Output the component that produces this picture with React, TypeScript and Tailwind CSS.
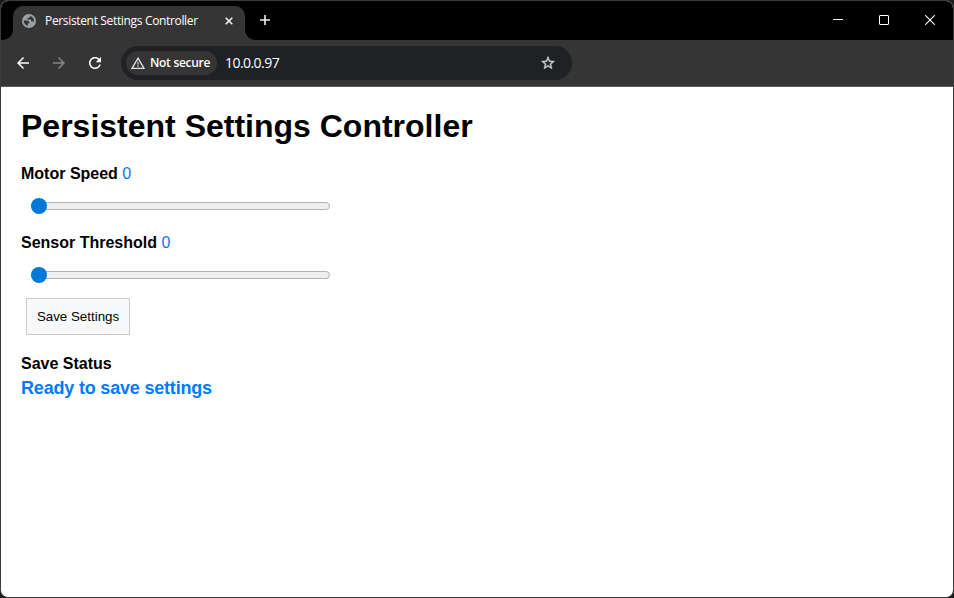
import React, { useState } from "react";

function Globe() {
  return (
    <svg width="14" height="14" viewBox="0 0 14 14" className="shrink-0">
      <circle cx="7" cy="7" r="7" fill="#9aa0a6" />
      <path
        d="M1.8 6.5H5Q7.3 6.7 7.4 8.5V9.3H5.9V11.8H7.2C4.2 12 1.8 9.8 1.8 6.5ZM8.4 2.1Q8.4 3.7 6.6 3.8H5.5V5.4H8.4Q9.3 5.5 9.3 6.5V7.4H12C12.3 4.8 10.6 2.7 8.4 2.1Z"
        fill="#353535"
      />
    </svg>
  );
}

function TabStrip() {
  return (
    <div className="flex h-[39px] shrink-0 items-end bg-black">
      <svg width="12" height="12" viewBox="0 0 12 12" className="shrink-0">
        <path d="M12 0V12H0Q12 12 12 0Z" fill="#353535" />
      </svg>
      <div className="flex h-[34px] w-[232px] shrink-0 items-center rounded-t-[10px] bg-[#353535] pb-[5px] pl-[9px]">
        <Globe />
        <span className="ml-[9px] w-[170px] whitespace-nowrap font-['Open_Sans','Noto_Sans',sans-serif] text-[12px] tracking-[-0.34px] text-white">
          Persistent Settings Controller
        </span>
        <svg width="8" height="8" viewBox="0 0 8 8" className="ml-[10px] shrink-0">
          <path d="M.7.7 7.3 7.3M7.3.7.7 7.3" stroke="#f1f1f1" strokeWidth="1.6" />
        </svg>
      </div>
      <svg width="12" height="12" viewBox="0 0 12 12" className="shrink-0">
        <path d="M0 0V12H12Q0 12 0 0Z" fill="#353535" />
      </svg>
      <svg width="10" height="10" viewBox="0 0 10 10" className="mb-[15px] ml-[3px] shrink-0">
        <path d="M5 0V10M0 5H10" stroke="#f1f1f1" strokeWidth="1.6" />
      </svg>
      <div className="mb-[15px] ml-auto mr-[18px] flex items-center gap-[36px]">
        <svg width="10" height="10" viewBox="0 0 10 10">
          <path d="M0 4.5H10" stroke="#fff" />
        </svg>
        <svg width="10" height="10" viewBox="0 0 10 10">
          <rect x=".5" y=".5" width="9" height="9" rx=".5" fill="none" stroke="#fff" />
        </svg>
        <svg width="10" height="10" viewBox="0 0 10 10">
          <path d="M.2.2 9.8 9.8M9.8.2.2 9.8" stroke="#fff" strokeWidth="1.1" />
        </svg>
      </div>
    </div>
  );
}

function Toolbar() {
  return (
    <div className="flex h-[47px] shrink-0 items-center border-b border-[#5c5c5c] bg-[#353535] pl-[13px]">
      <svg width="18" height="18" viewBox="0 0 24 24" className="shrink-0" fill="#fff">
        <path d="M20 11H7.83l5.59-5.59L12 4l-8 8 8 8 1.41-1.41L7.83 13H20v-2z" />
      </svg>
      <svg width="18" height="18" viewBox="0 0 24 24" className="ml-[18px] shrink-0" fill="#858585">
        <path d="M12 4l-1.41 1.41L16.17 11H4v2h12.17l-5.58 5.59L12 20l8-8z" />
      </svg>
      <svg width="18" height="18" viewBox="0 0 24 24" className="ml-[18px] shrink-0" fill="#fff">
        <path d="M17.65 6.35C16.2 4.9 14.21 4 12 4c-4.42 0-7.99 3.58-7.99 8s3.57 8 7.99 8c3.73 0 6.84-2.55 7.73-6h-2.08c-.82 2.33-3.04 4-5.65 4-3.31 0-6-2.69-6-6s2.69-6 6-6c1.66 0 3.14.69 4.22 1.78L13 11h7V4l-2.35 2.35z" />
      </svg>
      <div className="ml-[17px] flex h-[34px] w-[451px] items-center rounded-full bg-[#202124] pl-[5px] pr-[16px]">
        <div className="flex h-[24px] w-[91px] items-center rounded-full bg-[#353535] pl-[5px]">
          <svg width="14" height="12" viewBox="0 0 14 12" className="shrink-0">
            <path d="M7 1.2 13 11.4H1Z" fill="none" stroke="#e3e3e3" strokeWidth="1.3" />
            <path d="M7 4.7V7.8M7 8.6V9.9" stroke="#d0d0d0" strokeWidth="1.2" />
          </svg>
          <span className="ml-[5px] whitespace-nowrap font-['Open_Sans','Noto_Sans',sans-serif] text-[12px] font-semibold tracking-[-0.3px] text-white">
            Not secure
          </span>
        </div>
        <span className="ml-[8px] pb-px font-['Open_Sans','Noto_Sans',sans-serif] text-[14px] tracking-[-0.55px] text-white">
          10.0.0.97
        </span>
        <svg width="16" height="16" viewBox="0 0 24 24" className="ml-auto shrink-0" fill="#d0d1d3">
          <path d="M22 9.24l-7.19-.62L12 2 9.19 8.63 2 9.24l5.46 4.73L5.82 21 12 17.27 18.18 21l-1.63-7.03L22 9.24zM12 15.4l-3.76 2.27 1-4.28-3.32-2.88 4.38-.38L12 6.1l1.71 4.04 4.38.38-3.32 2.88 1 4.28L12 15.4z" stroke="#d0d1d3" strokeWidth=".6" />
        </svg>
      </div>
    </div>
  );
}

const trackClasses =
  "[&::-webkit-slider-runnable-track]:h-[8px] [&::-webkit-slider-runnable-track]:rounded-full [&::-webkit-slider-runnable-track]:border [&::-webkit-slider-runnable-track]:border-[#b2b2b2] [&::-webkit-slider-runnable-track]:bg-[#efefef]";
const thumbClasses =
  "[&::-webkit-slider-thumb]:ml-[-1px] [&::-webkit-slider-thumb]:mt-[-5px] [&::-webkit-slider-thumb]:size-[16px] [&::-webkit-slider-thumb]:appearance-none [&::-webkit-slider-thumb]:rounded-full [&::-webkit-slider-thumb]:bg-[#0078d7]";

function Setting({ label }: { label: string }) {
  const [value, setValue] = useState(0);
  return (
    <div className="flex h-[69px] flex-col">
      <div className="flex h-[18px] items-center gap-[4.4px] text-[16px] leading-[18px]">
        <span className="font-bold">{label}</span>
        <span className="text-[#007bff]">{value}</span>
      </div>
      <input
        type="range"
        min={0}
        max={100}
        value={value}
        aria-label={label}
        onChange={(e) => setValue(Number(e.target.value))}
        className={`ml-[10px] mt-[15px] h-[16px] w-[299px] appearance-none bg-transparent ${trackClasses} ${thumbClasses}`}
      />
    </div>
  );
}

export default function App() {
  return (
    <div className="h-[598px] w-[954px] overflow-hidden bg-[#1b1b1b]">
      <div className="flex h-full flex-col overflow-hidden rounded-[8px] border border-[#3c3c3c] bg-white">
        <TabStrip />
        <Toolbar />
        <main className="flex flex-1 flex-col items-start pl-[20px] font-['Liberation_Sans',Arial,sans-serif] text-black">
          <h1 className="mt-[21px] h-[37px] text-[32px] font-bold leading-[37px]">Persistent Settings Controller</h1>
          <div className="mt-[20px]">
            <Setting label="Motor Speed" />
            <Setting label="Sensor Threshold" />
          </div>
          <button className="ml-[5px] mt-[-5px] h-[37px] w-[104px] border border-[#cccccc] bg-[#f8f9fa] text-[13.333px]">
            Save Settings
          </button>
          <div className="mt-[20px] text-[16px] font-bold leading-[18px]">Save Status</div>
          <div className="mt-[5px] text-[18px] font-bold leading-[21px] tracking-[-0.19px] text-[#007bff]">
            Ready to save settings
          </div>
        </main>
      </div>
    </div>
  );
}
